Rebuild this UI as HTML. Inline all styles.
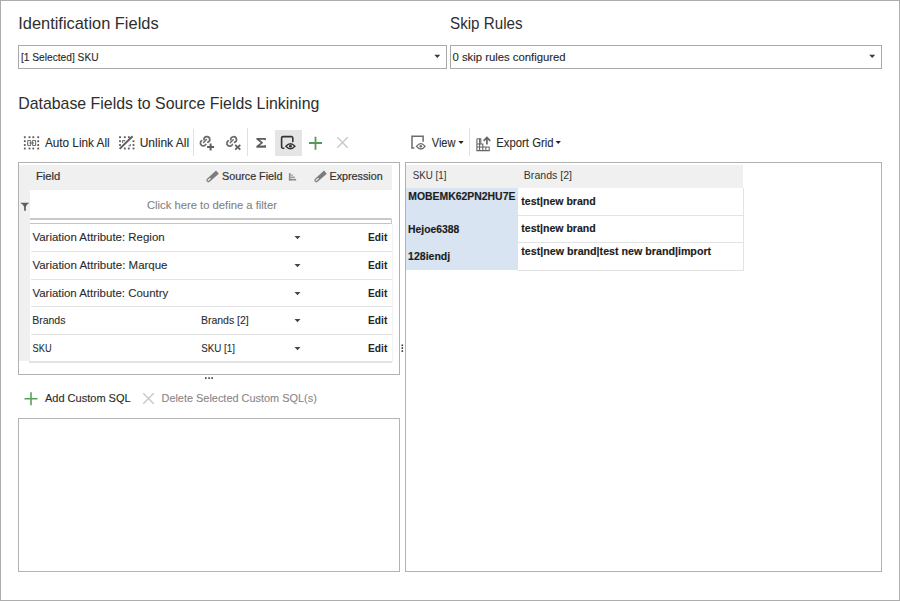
<!DOCTYPE html>
<html><head><meta charset="utf-8">
<style>
html,body{margin:0;padding:0;}
body{width:900px;height:601px;position:relative;overflow:hidden;background:#fff;font-family:"Liberation Sans",sans-serif;color:#333;}
.a{position:absolute;}
svg text{font-family:"Liberation Sans",sans-serif;white-space:pre;}
.frame{left:0;top:0;width:898px;height:599px;border:1px solid #adadad;}
.dd{border:1px solid #a9a9a9;background:#fff;height:22px;}
.caret{position:absolute;width:0;height:0;border-left:3.5px solid transparent;border-right:3.5px solid transparent;border-top:3.5px solid #444;}
.sep{position:absolute;width:1px;background:#e0e0e0;}
.hl{position:absolute;height:1px;background:#e3e3e3;}
</style></head><body>
<div class="a frame"></div>

<!-- Dropdowns -->
<div class="a dd" style="left:18px;top:45px;width:427px;"></div>
<div class="a dd" style="left:450px;top:45px;width:430px;"></div>

<!-- Toolbar left -->
<svg class="a" style="left:22px;top:134px" width="20" height="18" viewBox="0 0 20 18">
 <g fill="#585858">
  <rect x="1.9" y="2.3" width="1.8" height="1.8"/><rect x="6.6" y="2.3" width="1.8" height="1.8"/><rect x="10.4" y="2.3" width="1.8" height="1.8"/><rect x="15.3" y="2.3" width="1.8" height="1.8"/>
  <rect x="1.9" y="6.3" width="1.8" height="1.8"/><rect x="15.3" y="6.3" width="1.8" height="1.8"/>
  <rect x="1.9" y="10.1" width="1.8" height="1.8"/><rect x="15.3" y="10.1" width="1.8" height="1.8"/>
  <rect x="1.9" y="13.6" width="1.8" height="1.8"/><rect x="6.6" y="13.6" width="1.8" height="1.8"/><rect x="10.4" y="13.6" width="1.8" height="1.8"/><rect x="15.3" y="13.6" width="1.8" height="1.8"/>
 </g>
 <g fill="none" stroke="#707070" stroke-width="1.1">
  <rect x="5.7" y="6.5" width="3" height="5" rx="0.6"/><rect x="10.6" y="6.5" width="3" height="5" rx="0.6"/><path d="M7.4 9H11.9"/>
 </g>
</svg>

<svg class="a" style="left:117px;top:134px" width="20" height="18" viewBox="0 0 20 18">
 <g fill="#585858">
  <rect x="2.1" y="2.3" width="1.8" height="1.8"/><rect x="6.9" y="2.3" width="1.8" height="1.8"/><rect x="10.9" y="2.3" width="1.8" height="1.8"/>
  <rect x="2.1" y="6.3" width="1.8" height="1.8"/><rect x="15.6" y="6.3" width="1.8" height="1.8"/>
  <rect x="2.1" y="10.1" width="1.8" height="1.8"/><rect x="15.6" y="10.1" width="1.8" height="1.8"/>
  <rect x="6.9" y="13.6" width="1.8" height="1.8"/><rect x="10.9" y="13.6" width="1.8" height="1.8"/><rect x="15.6" y="13.6" width="1.8" height="1.8"/>
 </g>
 <path d="M2.6 14.9L15.6 2.2" stroke="#5c5c5c" stroke-width="1.9"/>
 <path d="M5.6 8.9V6.6H8.3M11.4 11.7H13.3V10" fill="none" stroke="#777" stroke-width="1.1"/>
</svg>

<div class="sep" style="left:193px;top:129px;height:27px;"></div>

<!-- link + -->
<svg class="a" style="left:196px;top:132px" width="22" height="22" viewBox="0 0 22 22">
 <g fill="none" stroke="#6a6a6a" stroke-width="1.7" stroke-linecap="round">
  <path d="M5.6 8.6A2.9 2.9 0 1 0 9.8 12.4"/>
  <path d="M8.0 7.7A2.9 2.9 0 1 1 11.8 10.2"/>
  <path d="M7.5 10.6L10.5 7.6" stroke-width="1.4"/>
 </g>
 <path d="M14.6 11.5V18.4M11.1 15H18.1" stroke="#606060" stroke-width="2"/>
</svg>
<!-- link x -->
<svg class="a" style="left:222px;top:132px" width="22" height="22" viewBox="0 0 22 22">
 <g fill="none" stroke="#6a6a6a" stroke-width="1.7" stroke-linecap="round">
  <path d="M6.3 8.8A2.9 2.9 0 1 0 10.4 12.5"/>
  <path d="M8.7 7.8A2.9 2.9 0 1 1 12.5 10.4"/>
  <path d="M8.2 10.7L11.2 7.7" stroke-width="1.4"/>
 </g>
 <path d="M13.2 12.9L18.3 17.6M18.3 12.9L13.2 17.6" stroke="#606060" stroke-width="1.9"/>
</svg>

<div class="sep" style="left:247px;top:128px;height:28px;"></div>

<!-- sigma -->
<svg class="a" style="left:255px;top:137px" width="12" height="12" viewBox="0 0 12 12">
 <path d="M1.4 1.0H10.9V3.3H9.6V2.8H4.7L8.3 5.7L4.7 8.6H9.6V7.9H10.9V10.7H1.4V9.0L5.7 5.7L1.4 2.5Z" fill="#5e5e5e"/>
</svg>

<!-- preview (active) -->
<div class="a" style="left:275px;top:130px;width:27px;height:26px;background:#e5e5e5;"></div>
<svg class="a" style="left:279px;top:134px" width="20" height="18" viewBox="0 0 20 18">
 <path d="M13.8 7.6V4A1.4 1.4 0 0 0 12.4 2.6H4A1.4 1.4 0 0 0 2.6 4V12.8A1.4 1.4 0 0 0 4 14.2H4.8" fill="none" stroke="#333" stroke-width="1.6" stroke-linecap="round"/>
 <path d="M6.9 12.2Q11.4 7.2 15.9 12.2Q11.4 17.2 6.9 12.2Z" fill="none" stroke="#333" stroke-width="1.4"/>
 <circle cx="11.4" cy="12.2" r="1.4" fill="#333"/>
</svg>

<!-- green plus -->
<svg class="a" style="left:308px;top:136px" width="15" height="15" viewBox="0 0 15 15">
 <path d="M7.5 0.7V13.7M1 7H14" stroke="#56995a" stroke-width="1.8"/>
</svg>
<!-- gray x -->
<svg class="a" style="left:336px;top:136px" width="13" height="13" viewBox="0 0 13 13">
 <path d="M1.3 1.3L11.7 11.7M11.7 1.3L1.3 11.7" stroke="#cacaca" stroke-width="1.5"/>
</svg>

<!-- Toolbar right -->
<svg class="a" style="left:409px;top:134px" width="20" height="18" viewBox="0 0 20 18">
 <path d="M14.1 7.7V2.3H3V14.1H5.3" fill="none" stroke="#6c6c6c" stroke-width="1.5"/>
 <path d="M7.5 12.3Q11.8 6.9 16.1 12.3Q11.8 17.7 7.5 12.3Z" fill="none" stroke="#6c6c6c" stroke-width="1.3"/>
 <circle cx="11.8" cy="12.3" r="1.3" fill="#6c6c6c"/>
</svg>
<div class="sep" style="left:469px;top:128px;height:28px;"></div>

<svg class="a" style="left:474px;top:134.6px" width="18" height="18" viewBox="0 0 18 18">
 <g fill="none" stroke="#666" stroke-width="1.1">
  <path d="M2.9 15.6V4.5A0.7 0.7 0 0 1 3.6 3.8H6.8V9H8.8V12H15.2V15.6Z"/>
  <path d="M2.9 9H6.8M2.9 12H8.8M5.6 3.8V15.6M8.8 12V15.6M11.9 12V15.6"/>
 </g>
 <path d="M12.9 9.4V2.6M9.6 5.9L12.9 2.4L16.2 5.9" fill="none" stroke="#666" stroke-width="1.7"/>
</svg>

<!-- Left grid -->
<div class="a" style="left:18px;top:162px;width:380px;height:211px;border:1px solid #b1b1b1;background:#fff;"></div>
<div class="a" style="left:19px;top:165px;width:373px;height:25px;background:#f0f0f0;"></div>
<div class="a" style="left:19px;top:190px;width:11px;height:171px;background:#f0f0f0;"></div>
<div class="a" style="left:30px;top:218px;width:361px;height:3px;border-top:2px solid #c8c8c8;border-bottom:1px solid #c4c4c4;border-right:1px solid #c4c4c4;border-radius:0 1.5px 1.5px 0;"></div>
<div class="a" style="left:392px;top:224px;width:1px;height:138px;background:#f0f0f0;"></div>
<div class="hl" style="left:31px;top:251px;width:361px;"></div>
<div class="hl" style="left:31px;top:279px;width:361px;"></div>
<div class="hl" style="left:31px;top:306px;width:361px;"></div>
<div class="hl" style="left:31px;top:334px;width:361px;"></div>
<div class="hl" style="left:29px;top:361px;width:363px;height:1.5px;"></div>

<svg class="a" style="left:202.4px;top:167px" width="20" height="20" viewBox="0 0 20 20">
 <path d="M14.0 3.6L16.8 6.8L7.36 14.9A1.9 1.9 0 0 1 4.84 12.1Z" fill="#7c7c7c"/>
 <ellipse cx="7.2" cy="12.5" rx="2.1" ry="0.75" transform="rotate(-41.6 7.2 12.5)" fill="#f6f6f6"/>
</svg>
<svg class="a" style="left:288px;top:172px" width="9" height="9" viewBox="0 0 9 9">
 <g fill="#8c8c8c"><rect x="0.9" y="1.1" width="1.6" height="7.4"/><rect x="0.9" y="6.8" width="7.2" height="1.7"/><rect x="2.5" y="4.6" width="4.3" height="1.2"/><rect x="2.5" y="2.6" width="2.4" height="1.0"/></g>
</svg>
<svg class="a" style="left:310px;top:167px" width="20" height="20" viewBox="0 0 20 20">
 <path d="M14.0 3.6L16.8 6.8L7.36 14.9A1.9 1.9 0 0 1 4.84 12.1Z" fill="#7c7c7c"/>
 <ellipse cx="7.2" cy="12.5" rx="2.1" ry="0.75" transform="rotate(-41.6 7.2 12.5)" fill="#f6f6f6"/>
</svg>

<svg class="a" style="left:20px;top:202px" width="10" height="10" viewBox="0 0 10 10">
 <path d="M0.2 0.8H9.3Q6.3 2.6 5.8 4.8V8.8H4.1V4.8Q3.6 2.6 0.2 0.8Z" fill="#5c5c5c"/>
</svg>


<!-- dots -->
<svg class="a" style="left:200px;top:375px" width="16" height="6"><g fill="#333"><rect x="5" y="2.3" width="1.6" height="1.6"/><rect x="8.3" y="2.3" width="1.6" height="1.6"/><rect x="11.3" y="2.3" width="1.6" height="1.6"/></g></svg>
<svg class="a" style="left:400px;top:342px" width="5" height="12"><g fill="#333"><rect x="1.5" y="2.5" width="1.6" height="1.6"/><rect x="1.5" y="5.3" width="1.6" height="1.6"/><rect x="1.5" y="8.3" width="1.6" height="1.6"/></g></svg>

<!-- Add custom SQL -->
<svg class="a" style="left:24px;top:392px" width="14" height="14" viewBox="0 0 14 14">
 <path d="M7 0.3V13.3M0.5 6.8H13.5" stroke="#5aa05d" stroke-width="1.6"/>
</svg>
<svg class="a" style="left:142px;top:392px" width="13" height="13" viewBox="0 0 13 13">
 <path d="M1.3 1.3L11.7 11.7M11.7 1.3L1.3 11.7" stroke="#c6c6c6" stroke-width="1.3"/>
</svg>

<div class="a" style="left:18px;top:418px;width:380px;height:152px;border:1px solid #b4b4b4;"></div>

<!-- Right grid -->
<div class="a" style="left:405px;top:162px;width:475px;height:408px;border:1px solid #b1b1b1;"></div>
<div class="a" style="left:406px;top:165px;width:337px;height:23px;background:#f0f0f0;"></div>
<div class="a" style="left:406px;top:188px;width:112px;height:82px;background:#d8e4f2;"></div>
<div class="a" style="left:518px;top:188px;width:225px;height:82px;border-right:1px solid #e3e3e3;border-bottom:1px solid #e3e3e3;"></div>
<div class="hl" style="left:518px;top:215px;width:225px;"></div>
<div class="hl" style="left:518px;top:242px;width:225px;"></div>

<svg class="a" style="left:0;top:0" width="900" height="601"><polygon points="434.3,54.8 440.3,54.8 437.3,58.0" fill="#3c3c3c"/><polygon points="869.2,54.8 875.2,54.8 872.2,58.0" fill="#3c3c3c"/><polygon points="294.5,236 300.5,236 297.5,239.2" fill="#444"/><polygon points="294.5,264 300.5,264 297.5,267.2" fill="#444"/><polygon points="294.5,292 300.5,292 297.5,295.2" fill="#444"/><polygon points="294.5,319 300.5,319 297.5,322.2" fill="#444"/><polygon points="294.5,347 300.5,347 297.5,350.2" fill="#444"/><polygon points="458.4,140.9 463.7,140.9 461.04999999999995,143.9" fill="#222"/><polygon points="555.6,140.9 560.9,140.9 558.25,143.9" fill="#222"/></svg>
<svg class="a" style="left:0;top:0" width="900" height="601" viewBox="0 0 900 601">
<text x="18.24" y="29" font-size="17" font-weight="400" fill="#2e2e2e" textLength="140.36" lengthAdjust="spacingAndGlyphs">Identification Fields</text>
<text x="450.06" y="29" font-size="17" font-weight="400" fill="#2e2e2e" textLength="72.49" lengthAdjust="spacingAndGlyphs">Skip Rules</text>
<text x="18.20" y="109" font-size="17" font-weight="400" fill="#2e2e2e" textLength="301.13" lengthAdjust="spacingAndGlyphs">Database Fields to Source Fields Linkining</text>
<text x="20.97" y="61" font-size="11" font-weight="400" fill="#262626" stroke="#262626" stroke-width="0.1" textLength="77.61" lengthAdjust="spacingAndGlyphs">[1 Selected] SKU</text>
<text x="452.46" y="61" font-size="11" font-weight="400" fill="#262626" stroke="#262626" stroke-width="0.1" textLength="113.17" lengthAdjust="spacingAndGlyphs">0 skip rules configured</text>
<text x="44.88" y="147" font-size="12.5" font-weight="400" fill="#2a2a2a" stroke="#2a2a2a" stroke-width="0.1" textLength="64.80" lengthAdjust="spacingAndGlyphs">Auto Link All</text>
<text x="139.69" y="147" font-size="12.5" font-weight="400" fill="#2a2a2a" stroke="#2a2a2a" stroke-width="0.1" textLength="49.41" lengthAdjust="spacingAndGlyphs">Unlink All</text>
<text x="431.75" y="147" font-size="12.5" font-weight="400" fill="#2a2a2a" stroke="#2a2a2a" stroke-width="0.1" textLength="23.72" lengthAdjust="spacingAndGlyphs">View</text>
<text x="496.27" y="147" font-size="12.5" font-weight="400" fill="#2a2a2a" stroke="#2a2a2a" stroke-width="0.1" textLength="57.26" lengthAdjust="spacingAndGlyphs">Export Grid</text>
<text x="35.98" y="180" font-size="10.5" font-weight="400" fill="#333333" stroke="#333333" stroke-width="0.2" textLength="24.35" lengthAdjust="spacingAndGlyphs">Field</text>
<text x="222.01" y="180" font-size="10.5" font-weight="400" fill="#333333" stroke="#333333" stroke-width="0.2" textLength="60.48" lengthAdjust="spacingAndGlyphs">Source Field</text>
<text x="329.52" y="180" font-size="10.5" font-weight="400" fill="#333333" stroke="#333333" stroke-width="0.2" textLength="53.18" lengthAdjust="spacingAndGlyphs">Expression</text>
<text x="146.93" y="209" font-size="11" font-weight="400" fill="#838383" stroke="#838383" stroke-width="0.1" textLength="129.96" lengthAdjust="spacingAndGlyphs">Click here to define a filter</text>
<text x="32.45" y="241" font-size="11" font-weight="400" fill="#2c2c2c" stroke="#2c2c2c" stroke-width="0.1" textLength="132.19" lengthAdjust="spacingAndGlyphs">Variation Attribute: Region</text>
<text x="32.45" y="269" font-size="11" font-weight="400" fill="#2c2c2c" stroke="#2c2c2c" stroke-width="0.1" textLength="135.05" lengthAdjust="spacingAndGlyphs">Variation Attribute: Marque</text>
<text x="32.45" y="297" font-size="11" font-weight="400" fill="#2c2c2c" stroke="#2c2c2c" stroke-width="0.1" textLength="135.77" lengthAdjust="spacingAndGlyphs">Variation Attribute: Country</text>
<text x="32.14" y="324" font-size="11" font-weight="400" fill="#2c2c2c" stroke="#2c2c2c" stroke-width="0.1" textLength="33.34" lengthAdjust="spacingAndGlyphs">Brands</text>
<text x="32.58" y="352" font-size="11" font-weight="400" fill="#2c2c2c" stroke="#2c2c2c" stroke-width="0.1" textLength="19.03" lengthAdjust="spacingAndGlyphs">SKU</text>
<text x="200.89" y="324" font-size="11" font-weight="400" fill="#2c2c2c" stroke="#2c2c2c" stroke-width="0.1" textLength="47.86" lengthAdjust="spacingAndGlyphs">Brands [2]</text>
<text x="201.31" y="352" font-size="11" font-weight="400" fill="#2c2c2c" stroke="#2c2c2c" stroke-width="0.1" textLength="33.64" lengthAdjust="spacingAndGlyphs">SKU [1]</text>
<text x="368.07" y="241" font-size="10.5" font-weight="700" fill="#262626" textLength="19.26" lengthAdjust="spacingAndGlyphs">Edit</text>
<text x="368.07" y="269" font-size="10.5" font-weight="700" fill="#262626" textLength="19.26" lengthAdjust="spacingAndGlyphs">Edit</text>
<text x="368.07" y="297" font-size="10.5" font-weight="700" fill="#262626" textLength="19.26" lengthAdjust="spacingAndGlyphs">Edit</text>
<text x="368.07" y="324" font-size="10.5" font-weight="700" fill="#262626" textLength="19.26" lengthAdjust="spacingAndGlyphs">Edit</text>
<text x="368.07" y="352" font-size="10.5" font-weight="700" fill="#262626" textLength="19.26" lengthAdjust="spacingAndGlyphs">Edit</text>
<text x="44.98" y="402" font-size="11.5" font-weight="400" fill="#2a2a2a" stroke="#2a2a2a" stroke-width="0.12" textLength="85.69" lengthAdjust="spacingAndGlyphs">Add Custom SQL</text>
<text x="161.50" y="402" font-size="11.5" font-weight="400" fill="#878787" stroke="#878787" stroke-width="0.1" textLength="155.27" lengthAdjust="spacingAndGlyphs">Delete Selected Custom SQL(s)</text>
<text x="412.76" y="179" font-size="10.3" font-weight="400" fill="#333" textLength="33.74" lengthAdjust="spacingAndGlyphs">SKU [1]</text>
<text x="523.83" y="179" font-size="10.3" font-weight="400" fill="#333" textLength="48.12" lengthAdjust="spacingAndGlyphs">Brands [2]</text>
<text x="408.30" y="200" font-size="10" font-weight="700" fill="#1c1c1c" stroke="#1c1c1c" stroke-width="0.15" textLength="107.10" lengthAdjust="spacingAndGlyphs">MOBEMK62PN2HU7E</text>
<text x="408.06" y="233" font-size="10" font-weight="700" fill="#1c1c1c" stroke="#1c1c1c" stroke-width="0.15" textLength="51.16" lengthAdjust="spacingAndGlyphs">Hejoe6388</text>
<text x="408.09" y="260" font-size="10" font-weight="700" fill="#1c1c1c" stroke="#1c1c1c" stroke-width="0.15" textLength="42.15" lengthAdjust="spacingAndGlyphs">128iendj</text>
<text x="521.27" y="205" font-size="10.5" font-weight="700" fill="#1c1c1c" stroke="#1c1c1c" stroke-width="0.15" textLength="74.42" lengthAdjust="spacingAndGlyphs">test|new brand</text>
<text x="521.27" y="232" font-size="10.5" font-weight="700" fill="#1c1c1c" stroke="#1c1c1c" stroke-width="0.15" textLength="74.42" lengthAdjust="spacingAndGlyphs">test|new brand</text>
<text x="521.27" y="255" font-size="10.5" font-weight="700" fill="#1c1c1c" stroke="#1c1c1c" stroke-width="0.15" textLength="189.86" lengthAdjust="spacingAndGlyphs">test|new brand|test new brand|import</text>
</svg>
</body></html>
